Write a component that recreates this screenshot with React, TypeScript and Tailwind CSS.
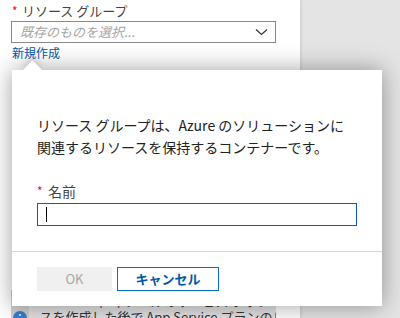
import React from "react";

export default function App() {
  return (
    <div className="relative w-[400px] h-[318px] overflow-hidden flex bg-[#e4e4e4] font-['Noto_Sans_CJK_JP','Noto_Sans',sans-serif] text-[#323130]">
      <div className="w-[300px] h-full bg-white shadow-[1px_0_3px_rgba(0,0,0,0.12)] flex flex-col pl-[11px] pt-[1px]">
        <div className="flex items-center h-[20px] text-[13px] leading-[20px] text-[#444]">
          <span className="text-[#e81123] text-[12px] w-[11px] pl-[1px]">*</span>
          <span>リソース グループ</span>
        </div>
        <div className="w-[265px] h-[22px] border border-[#8a8a8a] flex items-center justify-between pl-[8px] pr-[7px]">
          <span className="italic text-[13px] text-[#a6a6a6] leading-[20px]">既存のものを選択...</span>
          <svg width="13" height="8" viewBox="0 0 13 8" fill="none">
            <path d="M1 1.5 L6.5 6.5 L12 1.5" stroke="#333" strokeWidth="1.2" />
          </svg>
        </div>
        <div className="mt-[2px] text-[12px] leading-[16px] text-[#0058ad] pl-[1px]">新規作成</div>
        <div className="mt-[229px] w-[265px] h-[40px] flex bg-[#e2e2e2]">
          <div className="w-[22px] bg-[#cfcfcf] flex justify-center pt-[21px]">
            <div className="w-[14px] h-[14px] rounded-full bg-[#3a7bd5] flex items-start justify-center">
              <div className="w-[2px] h-[2px] mt-[3px] bg-white rounded-full" />
            </div>
          </div>
          <div className="pl-[10px] pt-[3px] text-[13px] leading-[16px] text-[#333] overflow-hidden">
            <div className="whitespace-nowrap">Standard (S1) レベルのサービス プランでリソー</div>
            <div className="whitespace-nowrap">スを作成した後で App Service プランのリ</div>
          </div>
        </div>
      </div>

      <div className="absolute left-[12px] top-[70px] w-[370px] h-[236px] bg-white shadow-[0_0_22px_rgba(0,0,0,0.38)]">
        <div className="absolute left-[14px] top-[-7px] w-[13px] h-[13px] bg-white rotate-45 shadow-[-3px_-3px_6px_rgba(0,0,0,0.12)]" />
        <div className="absolute left-[10px] top-0 w-[30px] h-[10px] bg-white" />
        <div className="relative pt-[44px] px-[25px] pb-[25px]">
          <p className="text-[14px] leading-[22px] text-[#222]">
            リソース グループは、Azure のソリューションに
            <br />
            関連するリソースを保持するコンテナーです。
          </p>
          <div className="mt-[23px] h-[20px] flex items-center text-[14px] leading-[20px] text-[#444]">
            <span className="text-[#e81123] text-[12px] w-[11px]">*</span>
            <span>名前</span>
          </div>
          <div className="mt-[2px] w-[320px] h-[23px] border border-[#135ba8] flex items-center pl-[8px]">
            <div className="w-[1px] h-[15px] bg-black" />
          </div>
        </div>
        <div className="border-t border-[#d6d6d6] pt-[15px] pb-[15px] px-[25px] flex gap-[5px]">
          <div className="w-[75px] h-[24px] bg-[#f0f0f0] flex items-center justify-center text-[13px] text-[#a6a6a6]">
            OK
          </div>
          <div className="w-[102px] h-[24px] border border-[#0a6ed1] flex items-center justify-center text-[13px] font-bold text-[#0058ad]">
            キャンセル
          </div>
        </div>
      </div>
    </div>
  );
}
